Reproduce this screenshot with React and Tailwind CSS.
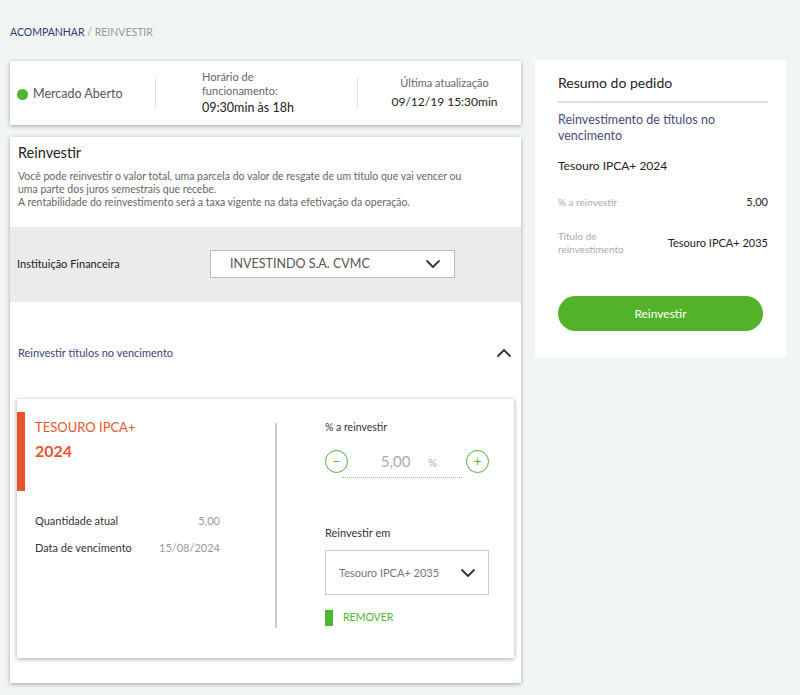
import React from 'react';

const font = { fontFamily: 'Lato, "Noto Sans", sans-serif' };

const Chevron = ({ up = false, className = '' }) => (
  <svg width="16" height="10" viewBox="0 0 16 10" className={className}>
    <path
      d={up ? 'M2 8 L8 2 L14 8' : 'M2 2 L8 8 L14 2'}
      fill="none"
      stroke="#333"
      strokeWidth="1.8"
      strokeLinecap="round"
      strokeLinejoin="round"
    />
  </svg>
);

const RoundBtn = ({ sign }) => (
  <button className="w-[23px] h-[23px] rounded-full border-[1.5px] border-[#4cb531] flex items-center justify-center text-[#4cb531] text-[13px] leading-none">
    {sign}
  </button>
);

const StatusBar = () => (
  <div className="bg-white h-[64px] shadow-[0_1px_4px_rgba(0,0,0,0.35)] flex items-center">
    <div className="w-[145px] flex items-center pl-[7px] gap-[5px] pt-[4px]">
      <span className="w-[11px] h-[11px] rounded-full bg-[#4cb531]" />
      <span className="text-[12.5px] text-[#555]">Mercado Aberto</span>
    </div>
    <div className="w-px h-[30px] bg-[#ddd]" />
    <div className="w-[201px] pl-[46px] text-[11px] text-[#666] leading-[14px]">
      <div>Horário de</div>
      <div>funcionamento:</div>
      <div className="text-[12.5px] text-[#222] mt-[3px]">09:30min às 18h</div>
    </div>
    <div className="w-px h-[30px] bg-[#ddd]" />
    <div className="flex-1 text-center pl-[10px]">
      <div className="text-[11px] text-[#666]">Última atualização</div>
      <div className="text-[12px] text-[#222] mt-[2px]">09/12/19 15:30min</div>
    </div>
  </div>
);

const TituloCard = () => (
  <div className="mx-[7px] bg-white h-[259px] shadow-[0_1px_5px_rgba(0,0,0,0.35)] flex pt-[13px]">
    <div className="w-[258px] flex flex-col">
      <div className="flex">
        <div className="w-[8px] h-[79px] bg-[#e8542a]" />
        <div className="pl-[10px] pt-[7px]">
          <div className="text-[13px] text-[#e8542a] leading-[16px]">TESOURO IPCA+</div>
          <div className="text-[16px] font-bold text-[#e8542a] mt-[4px]">2024</div>
        </div>
      </div>
      <div className="pl-[18px] pr-[55px] mt-[22px] text-[11px] text-[#333]">
        <div className="flex justify-between">
          <span>Quantidade atual</span>
          <span className="text-[#999]">5,00</span>
        </div>
        <div className="flex justify-between mt-[10px]">
          <span>Data de vencimento</span>
          <span className="text-[#999]">15/08/2024</span>
        </div>
      </div>
    </div>
    <div className="w-[2px] h-[205px] bg-[#ccc] mt-[11px]" />
    <div className="pl-[48px] w-[212px] pt-[8px]">
      <div className="text-[10.5px] text-[#333]">% a  reinvestir</div>
      <div className="flex items-center justify-between mt-[14px]">
        <RoundBtn sign="−" />
        <div className="flex items-baseline gap-[18px] pl-[4px]">
          <span className="text-[15px] text-[#aaa]">5,00</span>
          <span className="text-[11px] text-[#aaa]">%</span>
        </div>
        <RoundBtn sign="+" />
      </div>
      <div className="ml-[17px] mr-[27px] mt-[4px] border-b border-dotted border-[#aaa]" />
      <div className="text-[11px] text-[#333] mt-[47px]">Reinvestir em</div>
      <div className="mt-[9px] h-[45px] border border-[#ccc] flex items-center justify-between pl-[13px] pr-[12px]">
        <span className="text-[11px] text-[#777]">Tesouro IPCA+ 2035</span>
        <Chevron />
      </div>
      <div className="flex items-center gap-[10px] mt-[15px]">
        <span className="w-[8px] h-[16px] bg-[#4cb531]" />
        <span className="text-[10.5px] text-[#4cb531]">REMOVER</span>
      </div>
    </div>
  </div>
);

const Resumo = () => (
  <div className="w-[251px] bg-white h-[297px] pl-[23px] pr-[18px] pt-[12px]">
    <div className="text-[14px] text-[#222] pb-[8px] border-b-2 border-[#ddd]">Resumo do pedido</div>
    <div className="text-[12.5px] text-[#4a4a7c] leading-[16px] mt-[9px]">
      Reinvestimento de títulos no<br />vencimento
    </div>
    <div className="text-[12px] text-[#222] mt-[13px]">Tesouro IPCA+ 2024</div>
    <div className="flex justify-between items-center mt-[19px]">
      <span className="text-[10px] text-[#aaa]">% a reinvestir</span>
      <span className="text-[11px] text-[#222]">5,00</span>
    </div>
    <div className="flex justify-between items-center mt-[20px]">
      <span className="text-[10px] text-[#aaa] leading-[13px]">Título de<br />reinvestimento</span>
      <span className="text-[11px] text-[#222]">Tesouro IPCA+ 2035</span>
    </div>
    <button className="w-[205px] h-[35px] mt-[40px] rounded-full bg-[#52b32b] text-white text-[12px]">
      Reinvestir
    </button>
  </div>
);

export default function App() {
  return (
    <div className="min-h-[695px] bg-[#f1f5f3] pt-[25px] pl-[10px]" style={font}>
      <div className="text-[10.5px] mb-[20px]">
        <span className="text-[#2e3a78]">ACOMPANHAR</span>
        <span className="text-[#999]"> / REINVESTIR</span>
      </div>
      <div className="flex gap-[14px] items-start">
        <div className="w-[511px] flex flex-col gap-[12px]">
          <StatusBar />
          <div className="bg-white h-[546px] shadow-[0_1px_4px_rgba(0,0,0,0.35)] flex flex-col">
            <div className="px-[8px] pt-[5px]">
              <div className="text-[14.5px] text-[#222]">Reinvestir</div>
              <div className="text-[10.5px] text-[#666] leading-[13px] mt-[6px]">
                Você pode reinvestir o valor total, uma parcela do valor de resgate de um título que vai vencer ou<br />
                uma parte dos juros semestrais que recebe.<br />
                A rentabilidade do reinvestimento será a taxa vigente na data efetivação da operação.
              </div>
            </div>
            <div className="mt-[18px] h-[75px] bg-[#ebebeb] flex items-center pl-[7px]">
              <span className="w-[193px] text-[11px] text-[#222]">Instituição Financeira</span>
              <div className="w-[245px] h-[28px] bg-white border border-[#bbb] flex items-center justify-between pl-[19px] pr-[13px]">
                <span className="text-[12.5px] text-[#555]">INVESTINDO S.A. CVMC</span>
                <Chevron />
              </div>
            </div>
            <div className="flex items-center justify-between pl-[8px] pr-[9px] mt-[43px]">
              <span className="text-[11px] text-[#3c3f7a]">Reinvestir títulos no vencimento</span>
              <Chevron up />
            </div>
            <div className="mt-[38px]">
              <TituloCard />
            </div>
          </div>
        </div>
        <div className="mt-[-1px]">
          <Resumo />
        </div>
      </div>
    </div>
  );
}
